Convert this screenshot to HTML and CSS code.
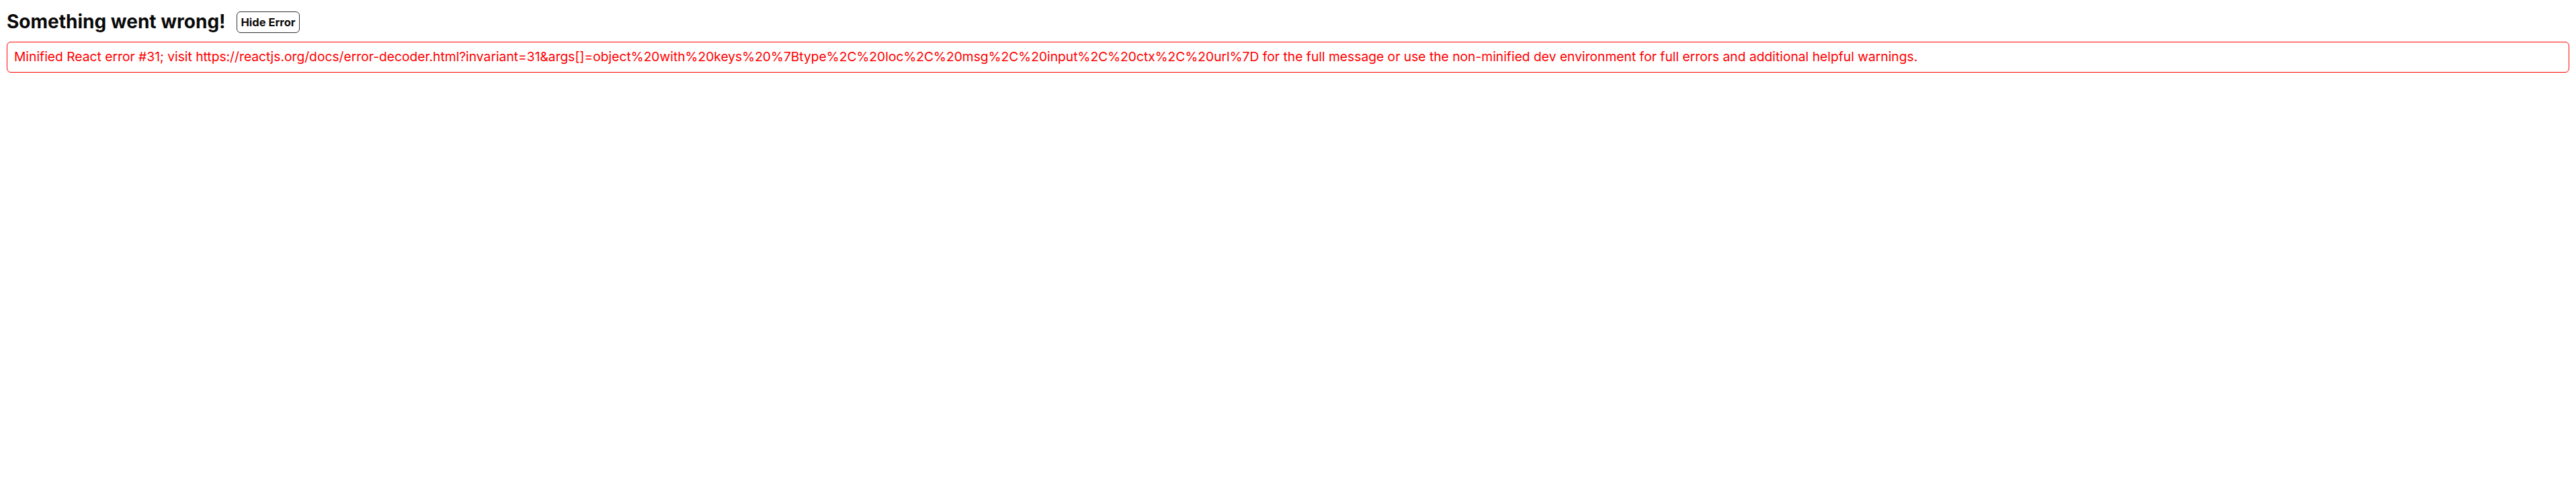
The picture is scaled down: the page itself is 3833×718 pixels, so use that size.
FILE: index.html
```html
<!DOCTYPE html>
<html lang="en">
<head>
<meta charset="utf-8">
<title>Error</title>
<link rel="stylesheet" href="styles.css">
</head>
<body>
<div class="page">
  <div class="error-header">
    <h2 class="error-title">Something went wrong!</h2>
    <button class="hide-btn" type="button">Hide Error</button>
  </div>
  <div class="error-box">Minified React error #31; visit https://reactjs.org/docs/error-decoder.html?invariant=31&amp;args[]=object%20with%20keys%20%7Btype%2C%20loc%2C%20msg%2C%20input%2C%20ctx%2C%20url%7D for the full message or use the non-minified dev environment for full errors and additional helpful warnings.</div>
</div>
</body>
</html>
```
FILE: styles.css
```css
html, body {
  margin: 0;
  padding: 0;
  background: #ffffff;
}
body {
  font-family: Inter, "Liberation Sans", sans-serif;
  color: #111111;
}
.page {
  padding: 10px;
}
.error-header {
  display: flex;
  align-items: flex-start;
  gap: 16px;
  padding-top: 7px;
}
.error-title {
  margin: 0;
  font-size: 28px;
  font-weight: 700;
  line-height: 30px;
  color: #0a0a0a;
}
.hide-btn {
  font-family: Inter, "Liberation Sans", sans-serif;
  font-size: 16.5px;
  font-weight: 700;
  line-height: 20px;
  padding: 5px 6px;
  border: 1px solid #333333;
  border-radius: 6px;
  background: #ffffff;
  color: #0a0a0a;
}
.error-box {
  margin-top: 13px;
  border: 1px solid #ff0000;
  border-radius: 6px;
  padding: 7px 10px 9px;
  font-size: 19.24px;
  line-height: 28px;
  color: #ff0000;
}
```
